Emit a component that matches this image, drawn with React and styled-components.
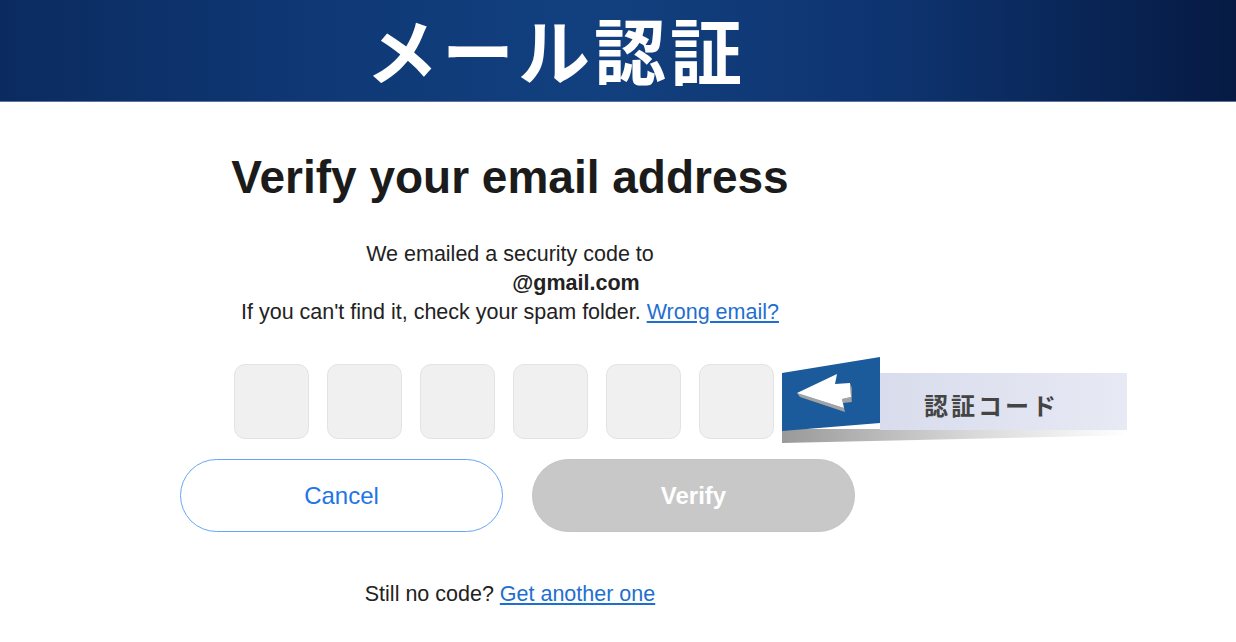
import React from 'react'
import styled, { createGlobalStyle } from 'styled-components'

const GlobalStyle = createGlobalStyle`
  html, body { margin: 0; padding: 0; background: #fff; }
  body { font-family: "Liberation Sans", Arial, sans-serif; color: #222; }
`

function App() {
    const digits = [0, 1, 2, 3, 4, 5]

    return (
        <>
            <GlobalStyle />
            <Header>
                <Title>メール認証</Title>
            </Header>

            <Main>
                <Heading>Verify your email address</Heading>

                <Info>
                    We emailed a security code to<br />
                    <Email><Hidden />@gmail.com</Email><br />
                    If you can't find it, check your spam folder. <Link href="#">Wrong email?</Link>
                </Info>

                <CodeRow>
                    {digits.map((d) => <CodeBox key={d} />)}

                    <Callout>
                        <svg width="98" height="76" viewBox="0 0 98 76">
                            <polygon points="0,16 98,0 98,66 0,74" fill="#1b5a9b" />
                            <polygon points="15,36 18,40 63,55 62,51" fill="#a3a3a3" />
                            <polygon points="62,51 63,55 61,46 60,42" fill="#8f8f8f" />
                            <polygon points="60,42 61,46 70,45 69,40" fill="#a3a3a3" />
                            <polygon points="69,40 70,45 70,31 68,26" fill="#8f8f8f" />
                            <polygon points="15,36 55,17 53,27 68,26 69,40 60,42 62,51" fill="#ffffff" />
                        </svg>
                        <Banner>認証コード</Banner>
                    </Callout>
                </CodeRow>

                <Buttons>
                    <Button>Cancel</Button>
                    <Button $primary disabled>Verify</Button>
                </Buttons>

                <Footer>
                    Still no code? <Link href="#">Get another one</Link>
                </Footer>
            </Main>
        </>
    )
}

export default App

const Header = styled.header`
height: 102px;
box-sizing: border-box;
display: flex;
align-items: center;
padding-left: 366px;
background: linear-gradient(90deg, #0b2b60 0%, #0f3977 28%, #12407f 48%, #0e3470 72%, #061a43 100%);
border-bottom: 1px solid #5b7398;
`

const Title = styled.h1`
margin: -4px 0 0;
font-family: "Noto Sans CJK JP", sans-serif;
font-weight: 700;
font-size: 72px;
line-height: 1.2;
color: #fff;
letter-spacing: 4px;
white-space: nowrap;
`

const Main = styled.main`
width: 660px;
padding-left: 180px;
`

const Heading = styled.h2`
margin: 52px 0 0;
font-size: 46px;
line-height: 46px;
font-weight: 700;
text-align: center;
color: #1b1b1b;
`

const Info = styled.p`
margin: 40px 0 0;
font-size: 21.5px;
line-height: 29px;
text-align: center;
`

const Email = styled.span`
font-weight: 700;
`

const Hidden = styled.span`
display: inline-block;
width: 132px;
`

const Link = styled.a`
color: #1f6fd1;
text-decoration: underline;
`

const CodeRow = styled.div`
position: relative;
display: flex;
gap: 18px;
margin: 37px 0 0 54px;
`

const CodeBox = styled.div`
width: 75px;
height: 75px;
box-sizing: border-box;
border-radius: 11px;
background: #f0f0f0;
border: 1px solid #e3e3e3;
`

const Callout = styled.div`
position: absolute;
left: 548px;
top: -7px;
width: 346px;
height: 88px;
display: flex;
align-items: flex-start;

svg { position: relative; z-index: 1; }

&::before {
    content: '';
    position: absolute;
    left: 0;
    top: 72px;
    width: 346px;
    height: 14px;
    background: linear-gradient(90deg, rgba(110,110,110,0.7), rgba(170,170,170,0.45) 55%, rgba(230,230,230,0));
    clip-path: polygon(0 0, 100% 0, 100% 45%, 0 100%);
}
`

const Banner = styled.div`
position: relative;
z-index: 1;
width: 247px;
height: 57px;
margin-top: 16px;
box-sizing: border-box;
padding: 6px 0 0 44px;
display: flex;
align-items: center;
background: linear-gradient(90deg, #d9dcec, #e7e9f4);
font-family: "Noto Sans CJK JP", sans-serif;
font-weight: 700;
font-size: 24px;
letter-spacing: 3px;
color: #444;
`

const Buttons = styled.div`
display: flex;
gap: 29px;
margin-top: 20px;
`

const Button = styled.button`
flex: none;
width: 323px;
height: 73px;
border-radius: 37px;
box-sizing: border-box;
font-family: "Liberation Sans", Arial, sans-serif;
font-size: 24px;
background: ${(p) => (p.$primary ? '#c8c8c8' : '#fff')};
color: ${(p) => (p.$primary ? '#fff' : '#1f75e6')};
font-weight: ${(p) => (p.$primary ? 700 : 400)};
border: ${(p) => (p.$primary ? '1px solid #c4c4c4' : '1.5px solid #67a6f4')};
`

const Footer = styled.p`
margin: 48px 0 0;
font-size: 21.5px;
line-height: 29px;
text-align: center;
`
